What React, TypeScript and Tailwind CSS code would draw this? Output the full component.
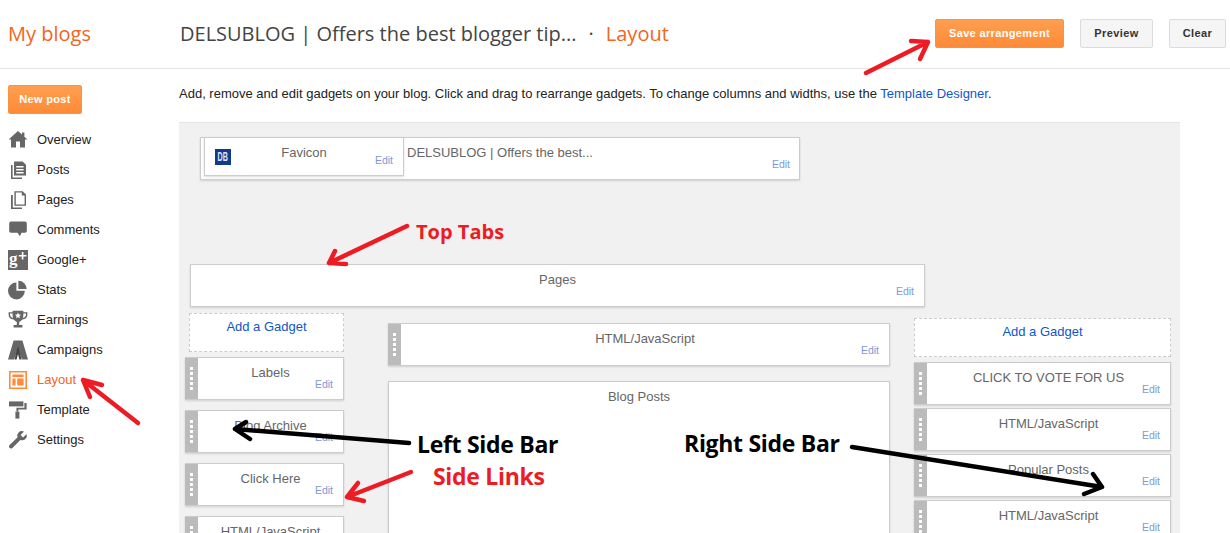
import type { ReactNode } from "react";

const icons: Record<string, ReactNode> = {
  Overview: <path d="M10 1 L14 4.6 V2.4 H16.4 V6.8 L19.4 9.6 H17 V17.4 H12 V11.6 H8 V17.4 H3 V9.6 H0.6 Z" />,
  Posts: (
    <>
      <path d="M6 1.4 H14.5 L18 4.8 V15.6 H6 Z M8.2 6 V7.4 H15.6 V6 Z M8.2 9 V10.4 H15.6 V9 Z M8.2 12 V13.4 H15.6 V12 Z" fillRule="evenodd" />
      <path d="M3 5 H4.6 V17.4 H14 V19 H3 Z" />
    </>
  ),
  Pages: (
    <>
      <path d="M6.4 1.2 H14.6 L18 4.6 V15.8 H6.4 Z M7.8 2.6 V14.4 H16.6 V5.4 H13.8 V2.6 Z" fillRule="evenodd" />
      <path d="M3 5 H4.8 V17.4 H14 V19 H3 Z" />
    </>
  ),
  Comments: <path d="M3 1.6 H17 Q18.8 1.6 18.8 3.4 V11 Q18.8 12.8 17 12.8 H13.6 L11.8 16.2 L9.6 12.8 H3 Q1.2 12.8 1.2 11 V3.4 Q1.2 1.6 3 1.6 Z" />,
  Stats: (
    <>
      <path d="M8.4 2.6 V10.8 H16.8 A8.4 8.4 0 1 1 8.4 2.6 Z" />
      <path d="M10.4 0.8 A8.2 8.2 0 0 1 18.6 9 H10.4 Z" />
    </>
  ),
  Earnings: (
    <>
      <path d="M4.6 0.8 H15.4 V2.2 H19.4 V5 Q19 9 14.4 9.6 Q12.8 11.6 11.2 12 V15 H14.4 V17.4 H5.6 V15 H8.8 V12 Q7.2 11.6 5.6 9.6 Q1 9 0.6 5 V2.2 H4.6 Z M2 3.4 V5 Q2.4 7.4 5 8 Q4.6 6 4.6 3.4 Z M18 3.4 H15.4 Q15.4 6 15 8 Q17.6 7.4 18 5 Z" fillRule="evenodd" />
      <path d="M10 2.6 L10.9 4.6 L13 4.8 L11.4 6.2 L11.9 8.3 L10 7.2 L8.1 8.3 L8.6 6.2 L7 4.8 L9.1 4.6 Z" fill="#fff" />
    </>
  ),
  Campaigns: (
    <>
      <path d="M5.6 0.6 H14.4 L20 19.6 H14.2 L10 10 L5.8 19.6 H0 Z" />
      <path d="M10 6 L13.6 19.6 H11.4 L10 14 L8.6 19.6 H6.4 Z" fill="#444" />
    </>
  ),
  Layout: <path d="M1 1 H19 V19 H1 Z M2.6 2.6 V17.4 H17.4 V2.6 Z M4.4 4.4 H15.6 V7 H4.4 Z M4.4 8.6 H7.6 V15.6 H4.4 Z M9.2 8.6 H15.6 V15.6 H9.2 Z" fillRule="evenodd" />,
  Template: (
    <>
      <path d="M1 1.4 H15.4 V6.4 H1 Z" />
      <path d="M16.4 3 H18.6 V9.6 H10.4 V11.6 H8.4 V7.8 H16.4 Z" />
      <path d="M7.4 11.6 H11.4 V18.6 H7.4 Z" />
    </>
  ),
  Settings: <path d="M18.6 4 L15 7.4 L12.6 5 L16 1.4 Q12.6 0.2 10.6 2.4 Q8.6 4.4 9.6 7.2 L1.4 15.2 Q0.4 16.4 1.4 17.8 Q3 19.2 4.4 18 L12.4 10 Q15.4 11 17.4 9 Q19.6 7 18.6 4 Z" />,
};

const navItems = ["Overview", "Posts", "Pages", "Comments", "Google+", "Stats", "Earnings", "Campaigns", "Layout", "Template", "Settings"];

const NavRow = ({ label }: { label: string }) => {
  const active = label === "Layout";
  return (
    <div className={`flex h-[30px] items-center gap-[9px] pl-2 text-[13px] ${active ? "text-[#f26522]" : "text-[#222]"}`}>
      {label === "Google+" ? (
        <svg viewBox="0 0 20 20" className="h-5 w-5 shrink-0">
          <rect width="20" height="20" fill="#666" />
          <text x="1" y="14" fontSize="17" fontWeight="700" fontFamily="'Liberation Serif', serif" fill="#fff">g</text>
          <path d="M13.8 2 H15.4 V5 H18.4 V6.6 H15.4 V9.6 H13.8 V6.6 H10.8 V5 H13.8 Z" fill="#fff" />
        </svg>
      ) : (
        <svg viewBox="0 0 20 20" className={`h-5 w-5 shrink-0 ${active ? "fill-[#ff8a3c]" : "fill-[#666]"}`}>
          {icons[label]}
        </svg>
      )}
      <span>{label}</span>
    </div>
  );
};

const Grip = () => (
  <div className="flex w-[13px] shrink-0 flex-col items-center justify-center gap-[2px] bg-[#bbb]">
    {[0, 1, 2, 3, 4].map((i) => (
      <span key={i} className="h-[3px] w-[3px] bg-white" />
    ))}
  </div>
);

interface WidgetProps {
  title: string;
  grip?: boolean;
  className?: string;
}

const Widget = ({ title, grip = true, className = "h-[43px]" }: WidgetProps) => (
  <div className={`flex shrink-0 border border-[#ccc] bg-white shadow-[0_1px_2px_rgba(0,0,0,0.14)] ${grip ? "border-l-0" : ""} ${className}`}>
    {grip && <Grip />}
    <div className="relative flex-1 pt-[7px] text-center text-[13px] leading-[15px] text-[#666]">
      {title}
      <span className="absolute bottom-[9px] right-[10px] text-[10.5px] leading-[12px] text-[#7d9ad8]">Edit</span>
    </div>
  </div>
);

const AddGadget = ({ className }: { className: string }) => (
  <div className={`h-[39px] shrink-0 border border-dashed border-[#ccc] bg-white pt-[5px] text-center text-[13px] leading-[15px] text-[#15c] ${className}`}>
    Add a Gadget
  </div>
);

const OrangeButton = ({ label, className }: { label: string; className: string }) => (
  <button className={`h-[29px] rounded-[2px] border border-[#f5963f] bg-gradient-to-b from-[#ff9f4f] to-[#fd8a37] text-[11px] font-bold tracking-[0.35px] text-[#fff] ${className}`}>
    {label}
  </button>
);

const GrayButton = ({ label, className }: { label: string; className: string }) => (
  <button className={`h-[29px] rounded-[2px] border border-[#dcdcdc] bg-[#f5f5f5] text-[11px] font-bold tracking-[0.4px] text-[#333] ${className}`}>
    {label}
  </button>
);

const Arrow = ({ d, color }: { d: string; color: string }) => (
  <path d={d} fill="none" stroke={color} strokeWidth="4.5" strokeLinecap="round" strokeLinejoin="round" />
);

const Note = ({ text, className }: { text: string; className: string }) => (
  <span className={`absolute font-['Open_Sans',sans-serif] font-bold leading-none ${className}`}>{text}</span>
);

export default function App() {
  return (
    <div className="relative h-[533px] w-[1230px] overflow-hidden bg-white font-['Liberation_Sans',Arial,sans-serif]">
      <header className="flex h-[69px] items-center border-b border-[#e5e5e5] pb-[2px] font-['Open_Sans',sans-serif]">
        <div className="mt-[2px] w-[180px] pl-2 text-[20px] text-[#f26522]">My blogs</div>
        <div className="mt-[2px] flex items-center text-[20px] text-[#444]">
          <span>DELSUBLOG | Offers the best blogger tip...</span>
          <span className="mx-[12px]">·</span>
          <span className="text-[#f26522]">Layout</span>
        </div>
        <div className="ml-auto flex gap-4 pr-[4px] font-['Liberation_Sans',Arial,sans-serif]">
          <OrangeButton label="Save arrangement" className="w-[129px]" />
          <GrayButton label="Preview" className="w-[73px]" />
          <GrayButton label="Clear" className="w-[57px]" />
        </div>
      </header>

      <div className="flex">
        <aside className="w-[179px] shrink-0 pt-4">
          <OrangeButton label="New post" className="ml-2 w-[74px]" />
          <nav className="mt-[11px]">
            {navItems.map((item) => (
              <NavRow key={item} label={item} />
            ))}
          </nav>
        </aside>

        <main className="flex-1">
          <p className="flex h-[53px] items-center pb-[4px] text-[13px] leading-[15px] text-[#222]">
            <span>
              Add, remove and edit gadgets on your blog. Click and drag to rearrange gadgets. To change columns and widths, use the{" "}
              <span className="text-[#15c]">Template Designer</span>.
            </span>
          </p>

          <section className="flex h-[411px] w-[1001px] flex-col border-t border-[#e5e5e5] bg-[#f1f1f1]">
            <div className="relative ml-[21px] mt-[14px] w-[600px]">
              <div className="h-[43px] border border-[#ccc] bg-white pl-[206px] pt-[7px] text-[13px] leading-[15px] text-[#666] shadow-[0_1px_2px_rgba(0,0,0,0.14)]">
                DELSUBLOG | Offers the best...
                <span className="absolute top-[21px] right-[10px] text-[10.5px] leading-[12px] text-[#7d9ad8]">Edit</span>
              </div>
              {/* favicon widget sits on top of the header one */}
              <div className="absolute left-[4px] top-0 flex h-[39px] w-[200px] border border-[#ccc] bg-white shadow-[0_1px_2px_rgba(0,0,0,0.14)]">
                <div className="ml-[10px] mt-[11px] flex h-4 w-4 items-center justify-center overflow-hidden bg-[#123a8c] text-[12px] font-bold leading-none text-[#dfe6f5]">
                  <span className="scale-x-[0.6]">DB</span>
                </div>
                <div className="flex-1 pr-[26px] pt-[7px] text-center text-[13px] leading-[15px] text-[#666]">Favicon</div>
                <span className="absolute top-[16px] right-[10px] text-[10.5px] leading-[12px] text-[#7d9ad8]">Edit</span>
              </div>
            </div>

            <Widget title="Pages" grip={false} className="ml-[11px] mt-[84px] h-[43px] w-[735px]" />

            <div className="mt-[6px] flex items-start">
              <div className="ml-[6px] flex w-[159px] flex-col">
                <AddGadget className="ml-[4px]" />
                <div className="mt-[5px] flex flex-col gap-[10px]">
                  <Widget title="Labels" />
                  <Widget title="Blog Archive" />
                  <Widget title="Click Here" />
                  <Widget title="HTML/JavaScript" />
                </div>
              </div>

              <div className="ml-[44px] mt-[10px] flex w-[502px] flex-col gap-[15px]">
                <Widget title="HTML/JavaScript" />
                <Widget title="Blog Posts" grip={false} className="h-[300px]" />
              </div>

              <div className="ml-[24px] mt-[5px] flex w-[257px] flex-col">
                <AddGadget className="" />
                <div className="mt-[5px] flex flex-col gap-[3px]">
                  <Widget title="CLICK TO VOTE FOR US" />
                  <Widget title="HTML/JavaScript" />
                  <Widget title="Popular Posts" />
                  <Widget title="HTML/JavaScript" />
                </div>
              </div>
            </div>
          </section>
        </main>
      </div>

      {/* hand drawn annotations on top of the screenshot */}
      <svg className="pointer-events-none absolute left-0 top-0 h-[533px] w-[1230px]" viewBox="0 0 1230 533">
        <Arrow color="#ed1c24" d="M866 73 L928 42 M911 41 L928 42 L920 59" />
        <Arrow color="#ed1c24" d="M407 226 L329 263 M335 251 L329 263 L346 264" />
        <Arrow color="#ed1c24" d="M138 423 L83 380 M102 385 L83 380 L90 397" />
        <Arrow color="#ed1c24" d="M411 472 L347 497 M358 483 L347 497 L364 501" />
        <Arrow color="#000" d="M409 443 L235 429 M246 422 L235 429 L250 439" />
        <Arrow color="#000" d="M852 447 L1102 487 M1093 474 L1102 487 L1084 494" />
      </svg>
      <Note text="Top Tabs" className="left-[416px] top-[222px] text-[20px] text-[#ed1c24]" />
      <Note text="Left Side Bar" className="left-[417px] top-[433px] text-[23px] tracking-[-0.3px] text-black" />
      <Note text="Side Links" className="left-[433px] top-[465px] text-[23px] tracking-[-0.3px] text-[#ed1c24]" />
      <Note text="Right Side Bar" className="left-[684px] top-[432px] text-[23px] tracking-[-0.3px] text-black" />
    </div>
  );
}
